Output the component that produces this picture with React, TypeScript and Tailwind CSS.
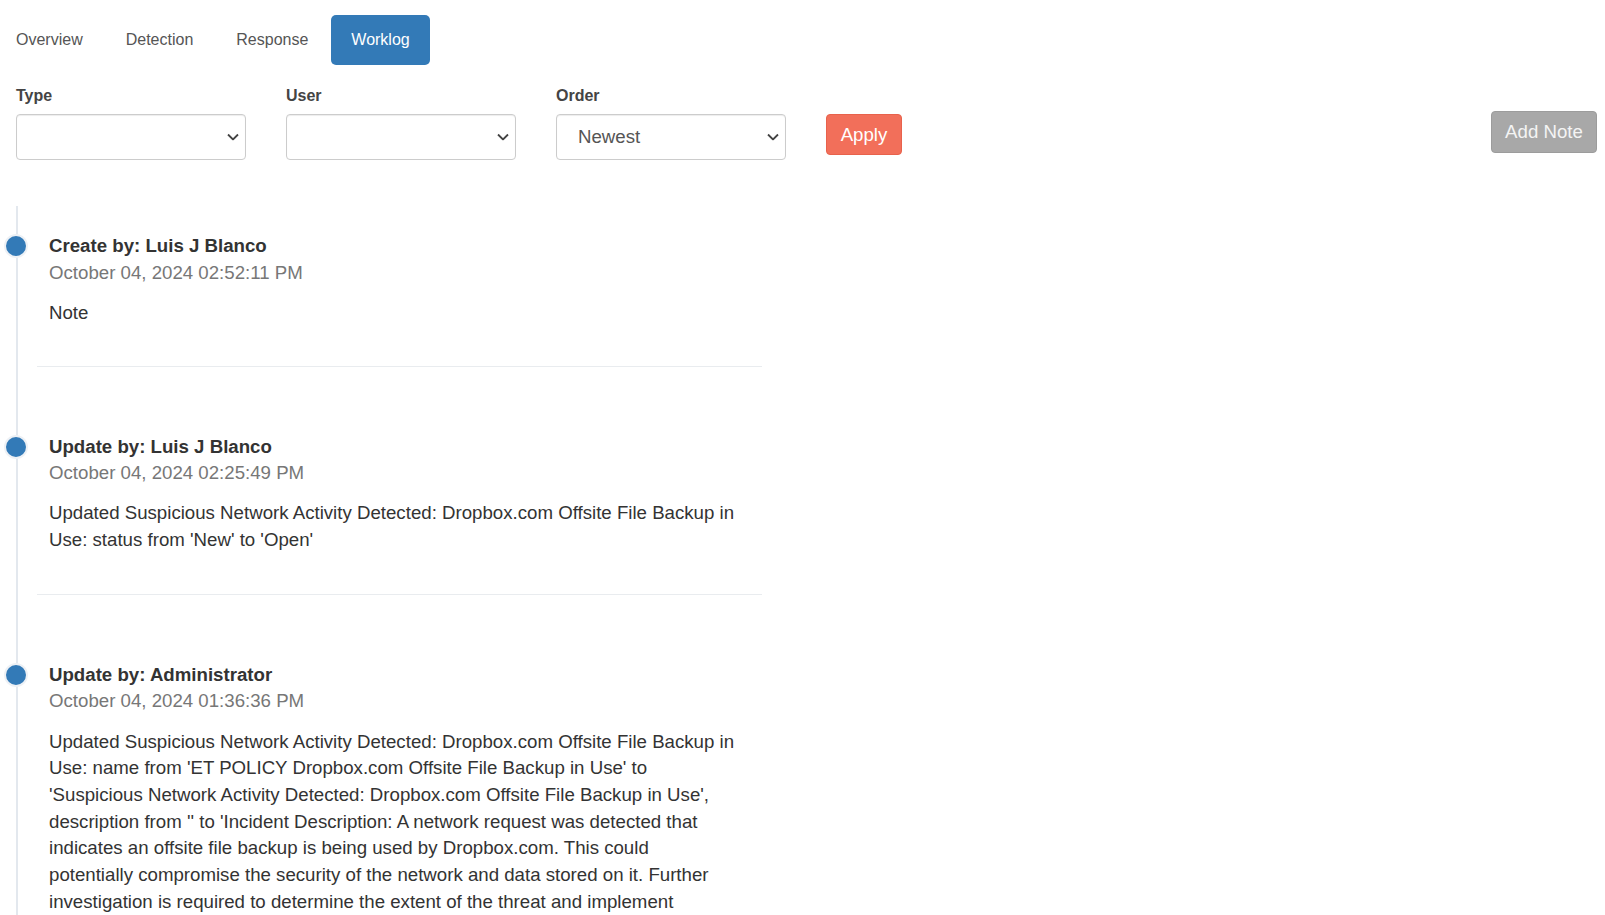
import { useState } from "react";

const tabs = ["Overview", "Detection", "Response", "Worklog"];

const entries = [
  {
    title: "Create by: Luis J Blanco",
    date: "October 04, 2024 02:52:11 PM",
    body: "Note",
  },
  {
    title: "Update by: Luis J Blanco",
    date: "October 04, 2024 02:25:49 PM",
    body: "Updated Suspicious Network Activity Detected: Dropbox.com Offsite File Backup in Use: status from 'New' to 'Open'",
  },
  {
    title: "Update by: Administrator",
    date: "October 04, 2024 01:36:36 PM",
    body: "Updated Suspicious Network Activity Detected: Dropbox.com Offsite File Backup in Use: name from 'ET POLICY Dropbox.com Offsite File Backup in Use' to 'Suspicious Network Activity Detected: Dropbox.com Offsite File Backup in Use', description from '' to 'Incident Description: A network request was detected that indicates an offsite file backup is being used by Dropbox.com. This could potentially compromise the security of the network and data stored on it. Further investigation is required to determine the extent of the threat and implement appropriate mitigation measures.'",
  },
];

function Chevron() {
  return (
    <svg
      className="pointer-events-none absolute right-[7px] top-1/2 -translate-y-1/2"
      width="12"
      height="7"
      viewBox="0 0 12 7"
      fill="none"
    >
      <path d="M1 1l5 5 5-5" stroke="#444" strokeWidth="1.8" />
    </svg>
  );
}

function Filter({ label, value }: { label: string; value?: string }) {
  return (
    <div className="flex flex-col">
      <label className="mb-[6px] text-base font-bold leading-6 text-[#444]">{label}</label>
      <div className="relative h-[46px] w-[230px]">
        <select
          defaultValue={value ?? ""}
          className="h-full w-full appearance-none rounded-[4px] border border-[#ccc] bg-white pl-[21px] text-[18.67px] text-[#555] shadow-[inset_0_1px_1px_rgba(0,0,0,0.075)] outline-none"
        >
          <option value="">{""}</option>
          {value && <option value={value}>{value}</option>}
        </select>
        <Chevron />
      </div>
    </div>
  );
}

export default function App() {
  const [active, setActive] = useState("Worklog");

  return (
    <div className="min-h-screen bg-white pl-4 pr-2 pt-[15px] font-['Liberation_Sans',Arial,sans-serif] text-[#333]">
      <nav className="-ml-5 flex gap-[3px]">
        {tabs.map((t) => (
          <button
            key={t}
            onClick={() => setActive(t)}
            className={
              active === t
                ? "h-[50px] rounded-[5px] bg-[#337ab7] px-5 text-base leading-6 text-white"
                : "h-[50px] rounded-[5px] px-5 text-base leading-6 text-[#555]"
            }
          >
            {t}
          </button>
        ))}
      </nav>

      <div className="mt-[19px] flex items-start gap-10">
        <Filter label="Type" />
        <Filter label="User" />
        <Filter label="Order" value="Newest" />
        <button className="mt-[30px] h-[41px] w-[76px] rounded-[4px] border border-[#e8624c] bg-[#f26f5a] text-[18.67px] text-white">
          Apply
        </button>
        <button className="ml-auto mt-[27px] h-[42px] w-[106px] rounded-[4px] border border-[#9c9c9c] bg-[#a8a8a8] text-[18.67px] text-[#f4f4f4]">
          Add Note
        </button>
      </div>

      <div className="mt-[46px] border-l-2 border-[#e3e8ee] pb-10">
        {entries.map((e, i) => (
          <div
            key={i}
            className={
              i === 0
                ? "ml-[19px] w-[725px] border-b border-[#e9ecef] pb-[39px] pl-3 pt-[27px]"
                : "ml-[19px] w-[725px] border-b border-[#e9ecef] pb-10 pl-3 pt-[67px]"
            }
          >
            <div className="relative text-[18.67px] font-bold leading-[26.67px] text-[#333]">
              <span className="absolute left-[-45px] top-[1px] h-6 w-6 rounded-full border-2 border-[#eef1f5] bg-[#337ab7]" />
              {e.title}
            </div>
            <div className="text-[18.67px] leading-[26.67px] text-[#777]">{e.date}</div>
            <p className="mt-[13.5px] w-[686px] text-[18.67px] leading-[26.67px] text-[#333]">{e.body}</p>
          </div>
        ))}
      </div>
    </div>
  );
}
